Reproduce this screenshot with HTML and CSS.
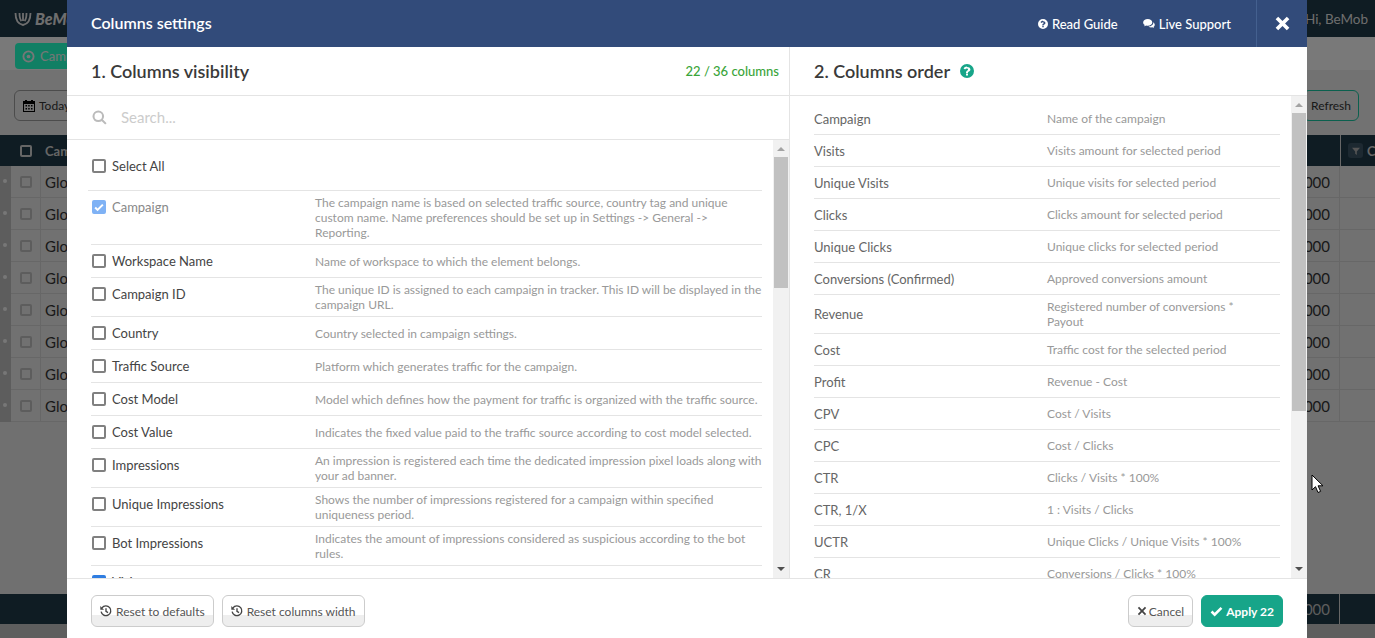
FILE: index.html
```html
<!DOCTYPE html>
<html lang="en">
<head>
  <meta charset="UTF-8" />
  <title>BeMob - Columns settings</title>
  <link rel="stylesheet" href="styles.css">
</head>
<body>
  <svg class="icon-defs" width="0" height="0">
    <symbol id="i-help" viewBox="0 0 14 14">
      <path fill-rule="evenodd" d="M7 0a7 7 0 1 1 0 14A7 7 0 0 1 7 0zM6 9.600v2h2v-2zM7 2.600c-1.700 0-2.800.8-3.400 1.900l1.500 1.100c.4-.6.9-1 1.700-1 .7 0 1.200.4 1.200.9 0 .6-.5.8-1.100 1.200C6.500 7.100 6 7.700 6 8.500v.4h2v-.3c0-.4.3-.6.9-1 .8-.5 1.500-1 1.500-2.100 0-1.700-1.600-2.500-3.400-2.500z"/>
    </symbol>
    <symbol id="i-chat" viewBox="0 0 16 14">
      <path d="M6.300 1C2.900 1 .2 3 .2 5.500c0 1.400.8 2.600 2.100 3.500-.2.700-.6 1.300-1.100 1.800 1.100-.1 2.200-.6 3-1.200.7.200 1.400.3 2.100.3 3.400 0 6.100-2 6.100-4.400S9.700 1 6.300 1z"/>
      <path d="M13.700 5.200c.1.300.1.500.1.800 0 2.700-2.800 4.900-6.500 5.100 1 .8 2.300 1.200 3.700 1.200.5 0 1-.1 1.500-.2.700.5 1.400.8 2.300.9-.4-.4-.7-.9-.8-1.400 1-.7 1.700-1.700 1.700-2.800 0-1.500-.8-2.800-2-3.600z"/>
    </symbol>
    <symbol id="i-close" viewBox="0 0 14 14">
      <path d="M3 .6 7 4.600l4-4L13.400 3l-4 4 4 4-2.400 2.400-4-4-4 4L.6 11l4-4-4-4z"/>
    </symbol>
    <symbol id="i-search" viewBox="0 0 16 16">
      <path fill="none" stroke="currentColor" stroke-width="2.200" d="M6.700 1.600a5.100 5.100 0 1 1 0 10.200 5.100 5.100 0 0 1 0-10.200zM10.400 10.400l4.400 4.400"/>
    </symbol>
    <symbol id="i-history" viewBox="0 0 14 14">
      <path fill="none" stroke="currentColor" stroke-width="1.600" d="M2.300 3.300A5.700 5.700 0 1 1 1.300 7.800M7 3.800v3.700l2.400 1.400"/>
      <path d="M.4 1.200v4.300h4.300z"/>
    </symbol>
    <symbol id="i-times" viewBox="0 0 12 12">
      <path d="M2.500 1 6 4.500 9.500 1l1.500 1.500L7.500 6 11 9.500 9.500 11 6 7.500 2.500 11 1 9.500 4.500 6 1 2.500z"/>
    </symbol>
    <symbol id="i-check" viewBox="0 0 14 12">
      <path d="M5 11.400.6 7l2-2L5 7.400 11.400 1l2 2z"/>
    </symbol>
    <symbol id="i-cal" viewBox="0 0 12 13">
      <path fill-rule="evenodd" d="M2 1h2v1h4V1h2v1h2v11H0V2h2zM1 5v7h10V5zM2.500 6h1.500v1.500H2.500zM5.200 6h1.500v1.500H5.200zM8 6h1.500v1.500H8zM2.500 9h1.500v1.500H2.500zM5.200 9h1.500v1.500H5.200zM8 9h1.500v1.500H8z"/>
    </symbol>
  </svg>

  <div class="app">
    <div class="topbar">
      <span class="logo"><svg class="logo-mark" viewBox="0 0 18 14"><path fill="none" stroke="currentColor" stroke-width="1.800" d="M1.500 1c0 6 2.500 11 7.500 12 5-1 7.500-6 7.500-12M5.500 1c0 4 1 7 2 8M12.500 1c0 4-1 7-2 8M9 1v8"/></svg>BeMob</span>
      <span class="hello">Hi, BeMob</span>
    </div>
    <div class="tabs"><span class="tab-active"><svg class="tab-icon" viewBox="0 0 14 14"><circle cx="7" cy="7" r="5.500" fill="none" stroke="currentColor" stroke-width="2"/><circle cx="7" cy="7" r="2" fill="currentColor"/></svg>Campaigns</span></div>
    <div class="toolbar">
      <span class="date-btn"><svg class="date-icon"><use href="#i-cal"/></svg>Today</span>
      <span class="refresh-btn">Refresh</span>
    </div>
    <div class="table-head">
      <span class="col-box"><i class="head-box"></i></span>
      <span class="col-name">Campaign</span>
      <span class="head-last">
        <span class="filter-btn"><svg viewBox="0 0 10 10"><path d="M0 1h10L6 5.500V10L4 8.500v-3z"/></svg></span>
        <span class="head-next">C</span>
      </span>
    </div>
    <div class="table-rows">
      <div class="table-row"><span class="mark"></span><span class="col-box"><i></i></span><span class="col-name">Global</span><span class="col-val">0.0000</span><span class="col-last"></span></div>
      <div class="table-row"><span class="mark"></span><span class="col-box"><i></i></span><span class="col-name">Global</span><span class="col-val">0.0000</span><span class="col-last"></span></div>
      <div class="table-row"><span class="mark"></span><span class="col-box"><i></i></span><span class="col-name">Global</span><span class="col-val">0.0000</span><span class="col-last"></span></div>
      <div class="table-row"><span class="mark"></span><span class="col-box"><i></i></span><span class="col-name">Global</span><span class="col-val">0.0000</span><span class="col-last"></span></div>
      <div class="table-row"><span class="mark"></span><span class="col-box"><i></i></span><span class="col-name">Global</span><span class="col-val">0.0000</span><span class="col-last"></span></div>
      <div class="table-row"><span class="mark"></span><span class="col-box"><i></i></span><span class="col-name">Global</span><span class="col-val">0.0000</span><span class="col-last"></span></div>
      <div class="table-row"><span class="mark"></span><span class="col-box"><i></i></span><span class="col-name">Global</span><span class="col-val">0.0000</span><span class="col-last"></span></div>
      <div class="table-row"><span class="mark"></span><span class="col-box"><i></i></span><span class="col-name">Global</span><span class="col-val">0.0000</span><span class="col-last"></span></div>
    </div>
    <div class="table-empty"></div>
    <div class="table-foot"><span class="col-val">0.0000</span><span class="col-last"></span></div>
    <div class="hscroll"></div>
  </div>

  <div class="overlay"></div>

  <div class="modal">
    <div class="modal-header">
      <div class="modal-title">Columns settings</div>
      <a class="head-link"><svg class="head-icon"><use href="#i-help"/></svg>Read Guide</a>
      <a class="head-link"><svg class="chat-icon"><use href="#i-chat"/></svg>Live Support</a>
      <div class="modal-close"><svg><use href="#i-close"/></svg></div>
    </div>

    <div class="modal-body">
      <div class="pane-left">
        <div class="pane-head">
          <h2>1. Columns visibility</h2>
          <span class="counter">22 / 36 columns</span>
        </div>
        <div class="search">
          <svg class="search-icon"><use href="#i-search"/></svg>
          <span class="search-text">Search...</span>
        </div>
        <div class="pane-scroll">
          <div class="vis-list">
            <div class="vis-row vis-all"><span class="box"></span><span class="vis-label">Select All</span></div>
            <div class="vis-row is-locked"><span class="box box-on"><svg><use href="#i-check"/></svg></span><span class="vis-label">Campaign</span><span class="vis-desc">The campaign name is based on selected traffic source, country tag and unique custom name. Name preferences should be set up in Settings -&gt; General -&gt; Reporting.</span></div>
            <div class="vis-row"><span class="box"></span><span class="vis-label">Workspace Name</span><span class="vis-desc">Name of workspace to which the element belongs.</span></div>
            <div class="vis-row"><span class="box"></span><span class="vis-label">Campaign ID</span><span class="vis-desc">The unique ID is assigned to each campaign in tracker. This ID will be displayed in the campaign URL.</span></div>
            <div class="vis-row"><span class="box"></span><span class="vis-label">Country</span><span class="vis-desc">Country selected in campaign settings.</span></div>
            <div class="vis-row"><span class="box"></span><span class="vis-label">Traffic Source</span><span class="vis-desc">Platform which generates traffic for the campaign.</span></div>
            <div class="vis-row"><span class="box"></span><span class="vis-label">Cost Model</span><span class="vis-desc">Model which defines how the payment for traffic is organized with the traffic source.</span></div>
            <div class="vis-row"><span class="box"></span><span class="vis-label">Cost Value</span><span class="vis-desc">Indicates the fixed value paid to the traffic source according to cost model selected.</span></div>
            <div class="vis-row"><span class="box"></span><span class="vis-label">Impressions</span><span class="vis-desc">An impression is registered each time the dedicated impression pixel loads along with your ad banner.</span></div>
            <div class="vis-row"><span class="box"></span><span class="vis-label">Unique Impressions</span><span class="vis-desc">Shows the number of impressions registered for a campaign within specified uniqueness period.</span></div>
            <div class="vis-row"><span class="box"></span><span class="vis-label">Bot Impressions</span><span class="vis-desc">Indicates the amount of impressions considered as suspicious according to the bot rules.</span></div>
            <div class="vis-row"><span class="box box-blue"></span><span class="vis-label">Visits</span><span class="vis-desc">Visits amount for selected period</span></div>
          </div>
          <div class="scrollbar">
            <span class="arrow-up"></span>
            <span class="thumb thumb-left"></span>
            <span class="arrow-down"></span>
          </div>
        </div>
      </div>

      <div class="pane-right">
        <div class="pane-head">
          <h2>2. Columns order</h2>
          <svg class="order-help"><use href="#i-help"/></svg>
        </div>
        <div class="pane-scroll">
          <div class="order-list">
            <div class="order-row"><span class="order-label">Campaign</span><span class="order-desc">Name of the campaign</span></div>
            <div class="order-row"><span class="order-label">Visits</span><span class="order-desc">Visits amount for selected period</span></div>
            <div class="order-row"><span class="order-label">Unique Visits</span><span class="order-desc">Unique visits for selected period</span></div>
            <div class="order-row"><span class="order-label">Clicks</span><span class="order-desc">Clicks amount for selected period</span></div>
            <div class="order-row"><span class="order-label">Unique Clicks</span><span class="order-desc">Unique clicks for selected period</span></div>
            <div class="order-row"><span class="order-label">Conversions (Confirmed)</span><span class="order-desc">Approved conversions amount</span></div>
            <div class="order-row"><span class="order-label">Revenue</span><span class="order-desc">Registered number of conversions * Payout</span></div>
            <div class="order-row"><span class="order-label">Cost</span><span class="order-desc">Traffic cost for the selected period</span></div>
            <div class="order-row"><span class="order-label">Profit</span><span class="order-desc">Revenue - Cost</span></div>
            <div class="order-row"><span class="order-label">CPV</span><span class="order-desc">Cost / Visits</span></div>
            <div class="order-row"><span class="order-label">CPC</span><span class="order-desc">Cost / Clicks</span></div>
            <div class="order-row"><span class="order-label">CTR</span><span class="order-desc">Clicks / Visits * 100%</span></div>
            <div class="order-row"><span class="order-label">CTR, 1/X</span><span class="order-desc">1 : Visits / Clicks</span></div>
            <div class="order-row"><span class="order-label">UCTR</span><span class="order-desc">Unique Clicks / Unique Visits * 100%</span></div>
            <div class="order-row"><span class="order-label">CR</span><span class="order-desc">Conversions / Clicks * 100%</span></div>
          </div>
          <div class="scrollbar">
            <span class="arrow-up"></span>
            <span class="thumb thumb-right"></span>
            <span class="arrow-down"></span>
          </div>
        </div>
      </div>
    </div>

    <div class="modal-footer">
      <button class="btn btn-reset"><svg class="btn-icon"><use href="#i-history"/></svg>Reset to defaults</button>
      <button class="btn btn-reset"><svg class="btn-icon"><use href="#i-history"/></svg>Reset columns width</button>
      <span class="footer-gap"></span>
      <button class="btn btn-cancel"><svg class="btn-times"><use href="#i-times"/></svg>Cancel</button>
      <button class="btn btn-apply"><svg class="btn-check"><use href="#i-check"/></svg>Apply 22</button>
    </div>
  </div>

  <svg class="cursor" viewBox="0 0 13 20"><path fill="#fff" stroke="#000" stroke-width="1" d="M1 1v15l3.500-3.300 2.500 5.800 2.600-1.100-2.500-5.600H12z"/></svg>
</body>
</html>
```

FILE: styles.css
```css
html, body {
  margin: 0;
  padding: 0;
  height: 100%;
  overflow: hidden;
}
body {
  font-family: Lato, 'Open Sans', sans-serif;
  color: #444;
  background-color: #dedede;
}
.icon-defs {
  display: block;
}

/* page behind the dialog */
.app {
  display: flex;
  flex-direction: column;
  height: 638px;
  color: #333;
  font-size: 14px;
}
.topbar {
  height: 37px;
  background-color: #1f3846;
  color: #ddd;
  display: flex;
  align-items: center;
  justify-content: space-between;
  padding: 0 7px 0 14px;
  flex-shrink: 0;
}
.logo {
  display: flex;
  align-items: center;
  gap: 3px;
  font-weight: 900;
  font-style: italic;
  font-size: 16px;
}
.logo-mark {
  width: 18px;
  height: 14px;
}
.hello {
  font-size: 13.5px;
}
.tabs {
  height: 33px;
  background-color: #f3f3f3;
  padding: 6px 0 0 15px;
  box-sizing: border-box;
  flex-shrink: 0;
}
.tab-active {
  display: inline-flex;
  align-items: center;
  gap: 5px;
  width: 120px;
  height: 26px;
  padding-left: 7px;
  box-sizing: border-box;
  background-color: #22ffc8;
  color: #eee;
  border-radius: 4px;
  font-size: 13px;
}
.tab-icon {
  width: 13px;
  height: 13px;
}
.toolbar {
  height: 65px;
  background-color: #e4e4e4;
  display: flex;
  align-items: center;
  justify-content: space-between;
  padding: 5px 16px 0 14px;
  box-sizing: border-box;
  flex-shrink: 0;
  font-size: 12px;
}
.date-btn, .refresh-btn {
  display: flex;
  align-items: center;
  height: 31px;
  box-sizing: border-box;
  border: 1px solid #999;
  border-radius: 6px;
  padding: 0 7px;
}
.date-btn {
  gap: 4px;
  width: 120px;
  padding-left: 8px;
}
.date-icon {
  width: 12px;
  height: 13px;
}
.refresh-btn {
  border-color: #17c09c;
}
.table-head {
  height: 31px;
  background-color: #1f3846;
  color: #ccc;
  display: flex;
  align-items: center;
  flex-shrink: 0;
  font-weight: 700;
  font-size: 13px;
}
.col-box {
  width: 30px;
  height: 100%;
  box-sizing: border-box;
  margin-left: 11px;
  margin-right: 4px;
  border-right: 1px solid #cfcfcf;
  display: flex;
  align-items: center;
  justify-content: center;
  flex-shrink: 0;
}
.table-head .col-box {
  border-right: none;
}
.col-box i {
  width: 8px;
  height: 8px;
  border: 2px solid #bbb;
  border-radius: 2px;
  display: block;
}
.col-box .head-box {
  border-color: #ccc;
}
.col-name {
  flex: 1;
}
.head-last {
  width: 35px;
  height: 100%;
  box-sizing: border-box;
  border-left: 1px solid #cfcfcf;
  padding-left: 7px;
  display: flex;
  align-items: center;
  gap: 4px;
  overflow: hidden;
  flex-shrink: 0;
}
.filter-btn {
  width: 15px;
  height: 15px;
  background-color: #3a5262;
  border-radius: 3px;
  display: flex;
  align-items: center;
  justify-content: center;
  flex-shrink: 0;
}
.filter-btn svg {
  width: 8px;
  height: 8px;
  fill: #aaa;
}
.table-row {
  height: 32px;
  box-sizing: border-box;
  display: flex;
  align-items: center;
  background-color: #e2e2e2;
  border-bottom: 1px solid #cfcfcf;
  font-size: 15px;
}
.mark {
  width: 11px;
  height: 32px;
  margin-right: -11px;
  background-color: #bbb;
}
.mark::after {
  content: "";
  display: block;
  width: 4px;
  height: 4px;
  border-radius: 50%;
  background-color: #eee;
  margin: 13px 0 0 3px;
}
.col-val {
  margin-left: auto;
}
.col-last {
  width: 35px;
  height: 100%;
  flex-shrink: 0;
  margin-left: 9px;
  border-left: 1px solid #cfcfcf;
}
.table-empty {
  flex: 1;
  background-color: #e0e0e0;
}
.table-foot {
  height: 30px;
  background-color: #1f3846;
  color: #bbb;
  display: flex;
  align-items: center;
  flex-shrink: 0;
  font-size: 15px;
}
.hscroll {
  height: 14px;
  background-color: #bdbdbd;
  flex-shrink: 0;
}
.overlay {
  position: absolute;
  inset: 0;
  background-color: rgba(0, 0, 0, 0.5);
}

/* dialog */
.modal {
  position: absolute;
  left: 67px;
  top: 0;
  width: 1240px;
  height: 638px;
  background: white;
  display: flex;
  flex-direction: column;
}
.modal-header {
  height: 47px;
  background-color: #324b7a;
  color: white;
  display: flex;
  align-items: center;
  padding-left: 24px;
  flex-shrink: 0;
}
.modal-title {
  flex: 1;
  font-size: 16px;
  font-weight: 600;
  padding-bottom: 3px;
}
.head-link {
  display: flex;
  align-items: center;
  gap: 4px;
  font-size: 13px;
  font-weight: 500;
  margin-right: 25px;
}
.head-icon {
  width: 10px;
  height: 10px;
  fill: white;
}
.chat-icon {
  width: 12px;
  height: 11px;
  fill: white;
}
.modal-close {
  width: 50px;
  height: 47px;
  border-left: 1px solid #44608f;
  display: flex;
  align-items: center;
  justify-content: center;
}
.modal-close svg {
  width: 15px;
  height: 15px;
  fill: white;
}
.modal-body {
  flex: 1;
  display: flex;
  min-height: 0;
}
.pane-left {
  width: 722px;
  border-right: 1px solid #e4e4e4;
  display: flex;
  flex-direction: column;
}
.pane-right {
  flex: 1;
  display: flex;
  flex-direction: column;
  min-width: 0;
}
.pane-head {
  height: 49px;
  box-sizing: border-box;
  border-bottom: 1px solid #e4e4e4;
  display: flex;
  align-items: center;
  padding: 0 10px 0 24px;
  flex-shrink: 0;
}
.pane-head h2 {
  margin: 0;
  font-size: 18px;
  font-weight: 600;
  color: #3a3a3a;
  flex: 1;
}
.pane-right .pane-head h2 {
  flex: none;
}
.counter {
  color: #3aa53a;
  font-size: 13px;
  font-weight: 500;
}
.order-help {
  width: 14px;
  height: 14px;
  fill: #17a589;
  margin: -1px 0 0 10px;
}
.search {
  height: 44px;
  box-sizing: border-box;
  border-bottom: 1px solid #e4e4e4;
  display: flex;
  align-items: center;
  padding-left: 25px;
  flex-shrink: 0;
}
.search-icon {
  width: 15px;
  height: 15px;
  color: #bbb;
}
.search-text {
  margin-left: 14px;
  padding-bottom: 1px;
  color: #ccc;
  font-size: 15px;
}
.pane-scroll {
  flex: 1;
  display: flex;
  min-height: 0;
  overflow: hidden;
}
.scrollbar {
  width: 16px;
  background-color: #f1f1f1;
  display: flex;
  flex-direction: column;
  align-items: center;
  flex-shrink: 0;
  overflow: hidden;
}
.arrow-up, .arrow-down {
  width: 0;
  height: 0;
  border-left: 4px solid transparent;
  border-right: 4px solid transparent;
}
.arrow-up {
  border-bottom: 4px solid #a3a3a3;
  margin-top: 7px;
}
.arrow-down {
  border-top: 4px solid #505050;
  margin-top: auto;
  margin-bottom: 7px;
}
.thumb {
  width: 14px;
  background-color: #c1c1c1;
}
.thumb-left {
  height: 131px;
  margin-top: 6px;
}
.thumb-right {
  height: 298px;
  margin-top: 6px;
}

/* left list */
.vis-list {
  flex: 1;
  min-width: 0;
  padding-right: 11px;
  overflow: hidden;
}
.vis-row {
  display: flex;
  align-items: flex-start;
  min-height: 24px;
  margin-left: 24px;
  padding: 4px 0;
  border-bottom: 1px solid #e4e4e4;
  font-size: 13px;
}
.vis-row.vis-all {
  height: 42px;
  margin-left: 21px;
  padding: 5px 0 3px 3px;
  align-items: center;
}
.box {
  width: 14px;
  height: 14px;
  box-sizing: border-box;
  border: 2px solid #808080;
  border-radius: 2px;
  margin: 5px 0 0 1px;
  flex-shrink: 0;
  display: flex;
  align-items: center;
  justify-content: center;
}
.vis-all .box {
  margin-top: 0;
}
.box-on {
  background-color: #7fb2f5;
  border-color: #7fb2f5;
}
.box-blue {
  background-color: #2f7de1;
  border-color: #2f7de1;
}
.box svg {
  width: 10px;
  height: 9px;
  fill: white;
}
.vis-label {
  width: 203px;
  margin-left: 6px;
  flex-shrink: 0;
  line-height: 24px;
  color: #444;
}
.is-locked .vis-label {
  color: #888;
}
.vis-desc {
  flex: 1;
  align-self: center;
  color: #999;
  font-size: 12px;
  line-height: 15px;
}

/* right list */
.order-list {
  flex: 1;
  min-width: 0;
  padding: 7px 11px 0 24px;
  overflow: hidden;
}
.order-row {
  display: flex;
  align-items: center;
  min-height: 31px;
  border-bottom: 1px solid #e4e4e4;
  font-size: 13px;
}
.order-label {
  width: 233px;
  flex-shrink: 0;
  color: #666;
}
.order-desc {
  flex: 1;
  color: #999;
  font-size: 12px;
  line-height: 15px;
  padding: 4px 30px 4px 0;
}

/* footer */
.modal-footer {
  height: 60px;
  box-sizing: border-box;
  border-top: 1px solid #e4e4e4;
  display: flex;
  align-items: center;
  gap: 8px;
  padding: 5px 24px 0;
  flex-shrink: 0;
}
.footer-gap {
  flex: 1;
}
.btn {
  height: 32px;
  box-sizing: border-box;
  font-family: inherit;
  font-size: 12px;
  color: #555;
  border: 1px solid #ccc;
  border-radius: 6px;
  background: linear-gradient(#fff 62%, #eee 62%);
  padding: 0 8px;
  display: flex;
  align-items: center;
  gap: 4px;
}
.btn-icon {
  width: 12px;
  height: 12px;
  color: #444;
  fill: #444;
}
.btn-cancel {
  gap: 2px;
}
.btn-times {
  width: 10px;
  height: 10px;
  fill: #444;
}
.btn-apply {
  background: #17a589;
  border-color: #17a589;
  color: white;
  font-weight: 700;
  gap: 3px;
}
.btn-check {
  width: 13px;
  height: 11px;
  fill: white;
}
.cursor {
  position: absolute;
  left: 1311px;
  top: 474px;
  width: 13px;
  height: 20px;
}
```
